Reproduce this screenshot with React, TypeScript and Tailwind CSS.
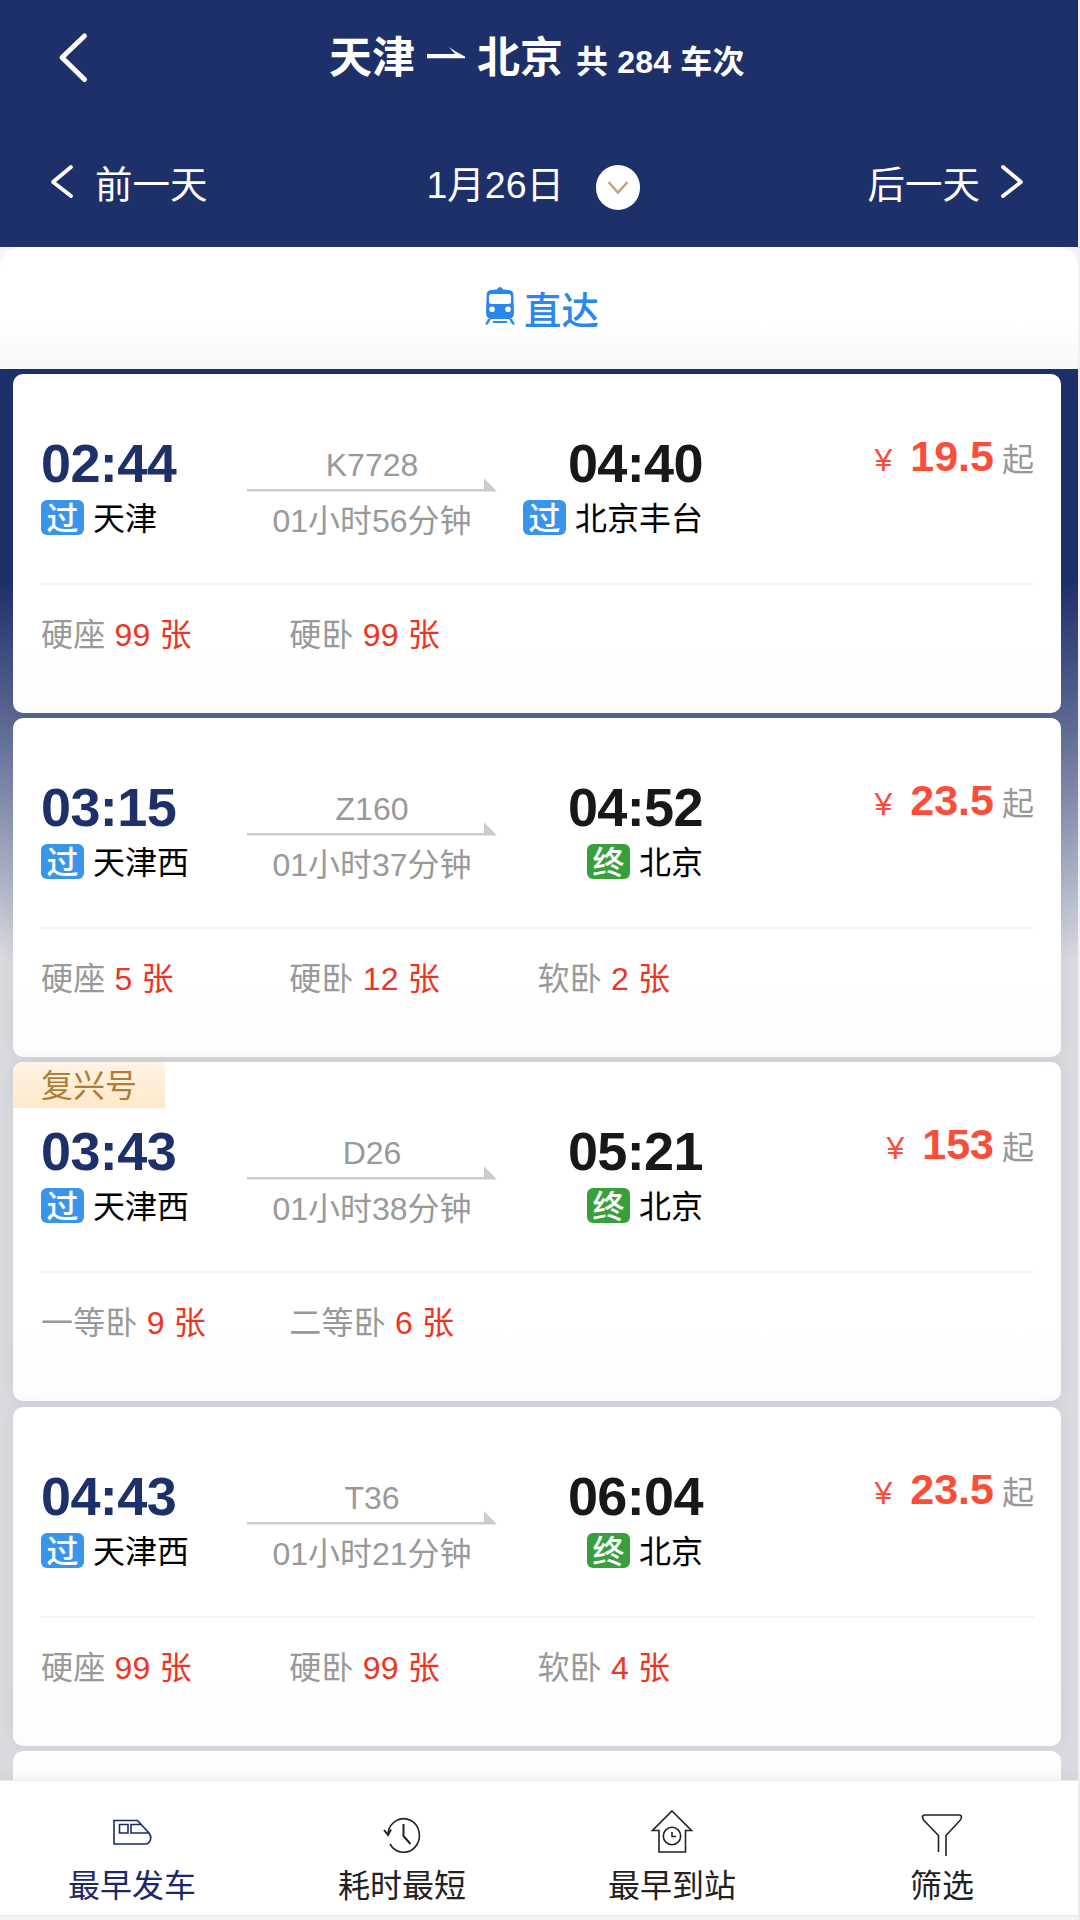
import { ReactNode } from "react";

type Seat = { name: string; left: number };

type Train = {
  no: string;
  from: string;
  to: string;
  start: string;
  end: string;
  terminal: boolean;
  duration: string;
  price: string;
  tag?: string;
  seats: Seat[];
};

const trains: Train[] = [
  {
    no: "K7728",
    from: "天津",
    to: "北京丰台",
    start: "02:44",
    end: "04:40",
    terminal: false,
    duration: "01小时56分钟",
    price: "19.5",
    seats: [
      { name: "硬座", left: 99 },
      { name: "硬卧", left: 99 },
    ],
  },
  {
    no: "Z160",
    from: "天津西",
    to: "北京",
    start: "03:15",
    end: "04:52",
    terminal: true,
    duration: "01小时37分钟",
    price: "23.5",
    seats: [
      { name: "硬座", left: 5 },
      { name: "硬卧", left: 12 },
      { name: "软卧", left: 2 },
    ],
  },
  {
    no: "D26",
    from: "天津西",
    to: "北京",
    start: "03:43",
    end: "05:21",
    terminal: true,
    duration: "01小时38分钟",
    price: "153",
    tag: "复兴号",
    seats: [
      { name: "一等卧", left: 9 },
      { name: "二等卧", left: 6 },
    ],
  },
  {
    no: "T36",
    from: "天津西",
    to: "北京",
    start: "04:43",
    end: "06:04",
    terminal: true,
    duration: "01小时21分钟",
    price: "23.5",
    seats: [
      { name: "硬座", left: 99 },
      { name: "硬卧", left: 99 },
      { name: "软卧", left: 4 },
    ],
  },
];

function Header() {
  return (
    <header className="h-[247px] bg-[#1e3069] text-white">
      {/* title */}
      <div className="flex h-[116px] items-start">
        <button className="ml-[57px] mt-[31px] w-8">
          <svg width="32" height="54" viewBox="0 0 32 54" fill="none">
            <path
              d="M27.5 5 L5 26.5 L27.5 48.5"
              stroke="currentColor"
              strokeWidth="5"
              strokeLinecap="round"
              strokeLinejoin="round"
            />
          </svg>
        </button>
        <h1 className="ml-[240px] mt-[33px] flex items-baseline text-[43px] leading-[50px] font-bold">
          天津
          <svg
            className="mr-[11px] ml-[11px] self-start mt-[14px]"
            width="40"
            height="14"
            viewBox="0 0 40 14"
          >
            <path d="M1 7 H29 L23 0 Q31 6 39 9.500 V11.200 H1 Z" fill="currentColor" />
          </svg>
          北京
          <span className="ml-[13px] text-[32px] tracking-[0.2px]">共 284 车次</span>
        </h1>
      </div>
      {/* date switch */}
      <div className="flex h-[131px] items-start text-[37.5px] leading-[44px]">
        <button className="ml-[49px] mt-[47px] flex items-start">
          <svg width="26" height="38" viewBox="0 0 26 38" fill="none">
            <path
              d="M22 4 L4 19 L22 33"
              stroke="currentColor"
              strokeWidth="3.8"
              strokeLinecap="round"
              strokeLinejoin="round"
            />
          </svg>
          <span className="ml-[20px]">前一天</span>
        </button>
        <div className="ml-[219px] mt-[47px] flex">
          <span className="w-[140px] whitespace-nowrap">1月26日</span>
          <span className="ml-[29px] mt-[2px] flex h-[45px] w-[44px] items-center justify-center rounded-full bg-white">
            <svg width="22" height="16" viewBox="0 0 22 16" fill="none">
              <path d="M1.5 2 L11 12.5 L20.5 2" stroke="#c4a582" strokeWidth="2.6" />
            </svg>
          </span>
        </div>
        <button className="ml-[228px] mt-[47px] flex items-start">
          <span>后一天</span>
          <svg className="ml-[19px]" width="26" height="38" viewBox="0 0 26 38" fill="none">
            <path
              d="M4 4 L22 19 L4 33"
              stroke="currentColor"
              strokeWidth="3.8"
              strokeLinecap="round"
              strokeLinejoin="round"
            />
          </svg>
        </button>
      </div>
    </header>
  );
}

function DirectTab() {
  return (
    <div className="bg-[#f5f5f6]">
      <div className="flex h-[121.500px] items-start rounded-t-[20px] bg-linear-to-b from-white from-65% to-[#f7f7f7] pl-[485px] pt-[40px] text-[#2a87ee]">
        <svg width="30" height="39" viewBox="0 0 30 39">
          <path
            fill="currentColor"
            fillRule="evenodd"
            d="M12 2.5 Q12.500 0 15 0 Q17.500 0 18 2.500 L24 3 Q28 3.500 28.300 7 L29 25 Q29 31 25 31.500 L27 32 L30 37.500 H27.300 L24 32 H6 L2.700 37.500 H0 L3 32 L5 31.500 Q1 31 1 25 L1.700 7 Q2 3.500 6 3 Z M6.500 7 Q4 7 4 9.500 V14.500 Q4 17 6.500 17 H23.500 Q26 17 26 14.500 V9.500 Q26 7 23.500 7 Z M7 19.500 A2.800 2.800 0 1 0 7 25.100 A2.800 2.800 0 1 0 7 19.500 Z M23 19.500 A2.800 2.800 0 1 0 23 25.100 A2.800 2.800 0 1 0 23 19.500 Z"
          />
          <path d="M8 35 H22" stroke="currentColor" strokeWidth="2" />
        </svg>
        <span className="ml-[9px] text-[37.5px] leading-[49px] font-medium">直达</span>
      </div>
    </div>
  );
}

function Badge({ terminal }: { terminal: boolean }) {
  return (
    <span
      className={
        terminal
          ? "mr-[9px] h-[35px] w-[43px] rounded-md bg-[#37a03c] text-center font-medium text-white"
          : "mr-[9px] h-[35px] w-[43px] rounded-md bg-[#3994ec] text-center font-medium text-white"
      }
    >
      {terminal ? "终" : "过"}
    </span>
  );
}

function TrainCard({ train }: { train: Train }) {
  return (
    <div className="h-[339px] overflow-hidden rounded-[10px] bg-linear-to-b from-white from-80% to-[#fdfdfd] text-[32px] shadow-[0_0_20px_rgba(30,40,80,0.06)]">
      <div className="h-[46px]">
        {train.tag && (
          <span className="block h-full w-[152px] bg-linear-to-b from-[#fff4e5] to-[#ffe8c8] pl-[28px] leading-[49px] text-[#ab7f3a]">
            {train.tag}
          </span>
        )}
      </div>
      <div className="mr-[27px] ml-[28px] flex h-[165px] border-b-2 border-[#f4f4f5] pt-4">
        <div className="w-[206px]">
          <p className="text-[54px] leading-[54px] font-bold tracking-[-0.6px] text-[#1e3069]">
            {train.start}
          </p>
          <p className="mt-[10px] flex h-[35px] leading-[39px] text-black">
            <Badge terminal={false} />
            {train.from}
          </p>
        </div>
        <div className="w-[250px] pt-[13px] text-center text-[#999]">
          <p className="h-[29px] leading-[33px]">{train.no}</p>
          <svg width="250" height="14" viewBox="0 0 250 14">
            <path d="M0 11 H237 V0 L250 13.500 H0 Z" fill="#ccc" />
          </svg>
          <p className="mt-[11px] leading-9">{train.duration}</p>
        </div>
        <div className="w-[206px]">
          <p className="text-right text-[54px] leading-[54px] font-bold tracking-[-0.6px] text-[#181818]">
            {train.end}
          </p>
          <p className="mt-[10px] flex h-[35px] justify-end leading-[39px] text-black">
            <Badge terminal={train.terminal} />
            {train.to}
          </p>
        </div>
        <p className="ml-auto leading-[41px] text-[#999]">
          <span className="text-[#fb4d3a]">¥</span>
          <span className="ml-[18px] mr-[8px] text-[43px] font-bold text-[#fb4d3a]">
            {train.price}
          </span>
          起
        </p>
      </div>
      <ul className="mr-[27px] ml-[28px] mt-8 grid grid-cols-4 leading-9 tracking-[0.2px]">
        {train.seats.map((seat) => (
          <li key={seat.name} className="text-[#999]">
            {seat.name} <span className="text-[#ee3524]">{seat.left} 张</span>
          </li>
        ))}
      </ul>
    </div>
  );
}

function NavItem({ label, active, children }: { label: string; active?: boolean; children: ReactNode }) {
  return (
    <button className={active ? "flex flex-col items-center text-[#1b2a66]" : "flex flex-col items-center text-[#222]"}>
      <svg
        className="mt-[25px]"
        width="48"
        height="54"
        viewBox="0 0 48 54"
        fill="none"
        stroke="currentColor"
        strokeWidth="1.6"
      >
        {children}
      </svg>
      <span className="mt-[6px] text-[32px] leading-[40px]">{label}</span>
    </button>
  );
}

function BottomNav() {
  return (
    <nav className="z-10 h-[140px] shrink-0 bg-[#f3f3f3] shadow-[0_0_16px_rgba(0,0,0,0.08)]">
      <div className="h-[136px] overflow-hidden border-y border-[#e9e9ea] bg-white">
        <div className="-ml-[3px] grid w-[1080px] grid-cols-4">
          <NavItem label="最早发车" active>
            <path d="M6 14.500 H29.500 L41 27 Q43.500 30 42.500 33.500 Q41 38 37.500 38 H6 Z M11.500 18.500 H20 V27 H11.500 Z M33 18.500 H23 V27 H40.500" />
          </NavItem>
          <NavItem label="耗时最短">
            <path d="M10 27 A15.800 16.800 0 1 1 12 38" />
            <path d="M6 24 L10 29 L13 23.500 M25.500 18 V30 L32.500 38" strokeWidth="2" />
          </NavItem>
          <NavItem label="最早到站">
            <path d="M24 5 L43.500 24.500 H37.500 V46 H11 V24.500 H4.500 Z" />
            <circle cx="24" cy="30" r="8.700" />
            <path d="M24 26 V30.500 H28" />
          </NavItem>
          <NavItem label="筛选">
            <path d="M20.500 46 V29.500 L6 14.500 Q4.500 12.500 4.500 11 Q4.500 9 7 9 H41 Q43.500 9 43.500 11 Q43.500 13 41.500 15 L28 29.500 V50" />
          </NavItem>
        </div>
      </div>
    </nav>
  );
}

export default function App() {
  return (
    <div className="h-[1920px] w-[1080px] overflow-hidden bg-[#f1f1f4] font-['Liberation_Sans','Noto_Sans_CJK_SC',sans-serif]">
      <div className="flex h-full w-[1078px] flex-col">
        <Header />
        <DirectTab />
        {/* train list */}
        <main className="min-h-0 flex-1 overflow-hidden bg-linear-to-b from-[#1e3069] from-[210px] via-[#616c96] via-[360px] to-[#dadbe0] to-[590px] pt-[5px]">
          <div className="ml-[13px] flex w-[1048px] flex-col gap-[5.4px]">
            {trains.map((train) => (
              <TrainCard key={train.no} train={train} />
            ))}
            <div className="h-[339px] rounded-[10px] bg-white" />
          </div>
        </main>
        <BottomNav />
      </div>
    </div>
  );
}
